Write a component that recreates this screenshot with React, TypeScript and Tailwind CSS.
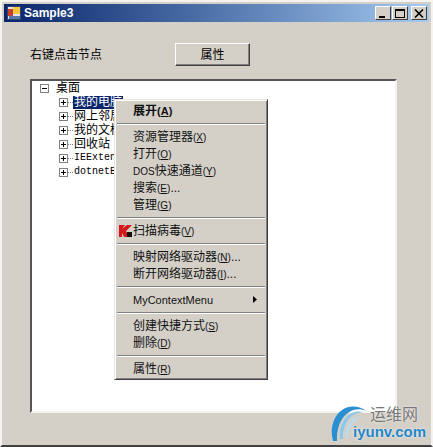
import type { ReactNode } from "react";

const CJK = "font-['Liberation_Sans','Noto_Sans_CJK_SC',sans-serif]";

function Expander({ open = false }: { open?: boolean }) {
  return (
    <svg width="9" height="9" viewBox="0 0 9 9" className="shrink-0">
      <rect x="0.5" y="0.5" width="8" height="8" fill="#fff" stroke="#808080" />
      <path d={open ? "M2 4.5H7" : "M2 4.5H7M4.5 2V7"} stroke="#000" />
    </svg>
  );
}

function TreeRow({ label, mono = false, selected = false }: { label: string; mono?: boolean; selected?: boolean }) {
  return (
    <div className="flex h-[14px] items-center pl-[27px]">
      <Expander />
      <div className="h-0 w-[5px] border-t border-dotted border-[#808080]" />
      <span
        className={`flex h-[13px] items-center whitespace-nowrap px-px leading-none ${
          mono ? "font-['Liberation_Mono',monospace] text-[10px]" : "text-[12px]"
        } ${selected ? "bg-[#0a246a] text-white" : "text-black"}`}
      >
        {label}
      </span>
    </div>
  );
}

function Sep() {
  return (
    <div className="flex h-[9px] items-center">
      <div className="h-[2px] w-full border-t border-b border-t-[#808080] border-b-white" />
    </div>
  );
}

function Item({ text, hot, tail = "", bold = false, icon = false, arrow = false }: { text: ReactNode; hot?: string; tail?: string; bold?: boolean; icon?: boolean; arrow?: boolean }) {
  return (
    <div className={`relative flex h-[17px] items-center whitespace-nowrap pl-[16px] text-[12px] leading-none text-[#111] ${bold ? "font-bold" : ""}`}>
      {icon && (
        <svg width="14" height="14" viewBox="0 0 14 14" className="absolute left-[2px] top-[2px]">
          <path d="M0 1H6L3 5L8 1H13L7 7L10 13H5L3 9V13H0Z" fill="#d8141c" />
          <path d="M8 8H13V13H8Z" fill="#111" />
        </svg>
      )}
      <span>
        {text}
        {hot && (
          <span className={bold ? "text-[11px]" : "text-[10px]"}>
            (<span className="underline">{hot}</span>)
          </span>
        )}
        {tail}
      </span>
      {arrow && (
        <svg width="4" height="7" viewBox="0 0 4 7" className="absolute right-[8px] top-[5px]">
          <path d="M0 0L4 3.5L0 7Z" fill="#000" />
        </svg>
      )}
    </div>
  );
}

function Caption({ children }: { children: ReactNode }) {
  return (
    <div className="flex h-[14px] w-[16px] items-center justify-center border border-t-white border-l-white border-r-[#404040] border-b-[#404040] bg-[#d4d0c8]">
      {children}
    </div>
  );
}

export default function App() {
  return (
    <div className={`relative h-[447px] w-[433px] overflow-hidden border-x-2 border-t-2 border-b-2 border-x-[#f4f3ef] border-t-[#f4f3ef] border-b-[#404040] bg-[#d4d0c8] ${CJK}`}>
      <div className="mx-[2px] mt-[2px] flex h-[18px] items-center bg-gradient-to-r from-[#0a246a] to-[#a6caf0] pl-[3px] pr-[2px]">
        <svg width="14" height="14" viewBox="0 0 14 14" className="shrink-0">
          <rect x="0.5" y="0.5" width="13" height="13" fill="#dfe6f0" stroke="#31456f" />
          <rect x="1" y="3" width="5" height="7" fill="#c8402c" />
          <rect x="6" y="1" width="7" height="7" fill="#f4c73c" />
          <rect x="2" y="10" width="11" height="3" fill="#5878b0" />
        </svg>
        <span className="ml-[3px] text-[12px] font-bold text-white">Sample3</span>
        <div className="ml-auto flex gap-px">
          <Caption>
            <div className="mt-[7px] mr-[2px] h-[2px] w-[6px] bg-black" />
          </Caption>
          <div className="mr-[2px]">
            <Caption>
              <div className="h-[9px] w-[10px] border border-t-2 border-black" />
            </Caption>
          </div>
          <Caption>
            <svg width="10" height="9" viewBox="0 0 10 9">
              <path d="M1 0.5L9 8.5M9 0.5L1 8.5" stroke="#000" strokeWidth="1.6" />
            </svg>
          </Caption>
        </div>
      </div>

      <div className="mt-[21px] flex h-[23px] items-center pl-[28px]">
        <span className="w-[145px] text-[12px] text-black">右键点击节点</span>
        <button className="flex h-[23px] w-[75px] items-center justify-center border border-t-white border-l-white border-r-[#404040] border-b-[#404040] bg-[#d4d0c8] text-[12px] text-black shadow-[inset_-1px_-1px_0_#808080]">
          属性
        </button>
      </div>

      <div className="ml-[28px] mt-[13px] h-[334px] w-[367px] border-2 border-t-[#555] border-l-[#555] border-b-[#f4f3ef] border-r-[#f4f3ef] bg-white">
        <div className="flex h-[14px] items-center pl-[8px]">
          <Expander open />
          <span className="ml-[7px] text-[12px] leading-none text-black">桌面</span>
        </div>
        <TreeRow label="我的电脑" selected />
        <TreeRow label="网上邻居" />
        <TreeRow label="我的文档" />
        <TreeRow label="回收站" />
        <TreeRow label="IEExtension" mono />
        <TreeRow label="dotnetBar" mono />
      </div>

      <div className="absolute left-[112px] top-[97px] w-[154px] border border-t-[#e8e6e0] border-l-[#e8e6e0] border-r-[#404040] border-b-[#404040] bg-[#d4d0c8] p-[2px] shadow-[inset_1px_1px_0_#fff,inset_-1px_-1px_0_#808080]">
        <Item text="展开" hot="A" bold />
        <Sep />
        <Item text="资源管理器" hot="X" />
        <Item text="打开" hot="O" />
        <Item text={<><span className="text-[10px]">DOS</span>快速通道</>} hot="Y" />
        <Item text="搜索" hot="E" tail="..." />
        <Item text="管理" hot="G" />
        <Sep />
        <Item text="扫描病毒" hot="V" icon />
        <Sep />
        <Item text="映射网络驱动器" hot="N" tail="..." />
        <Item text="断开网络驱动器" hot="I" tail="..." />
        <Sep />
        <Item text={<span className="text-[11px]">MyContextMenu</span>} arrow />
        <Sep />
        <Item text="创建快捷方式" hot="S" />
        <Item text="删除" hot="D" />
        <Sep />
        <Item text="属性" hot="R" />
      </div>

      <div className="absolute left-[328px] top-[397px] h-[46px] w-[101px]">
        <svg width="44" height="46" viewBox="0 0 44 46" className="absolute left-0 top-0">
          <path d="M3 42C-3 20 14 -2 37 12C20 5 6 20 7 42Z" fill="#2a8fd0" />
          <path d="M10 40C8 24 20 7 35 14C22 11 12 25 13 40Z" fill="#8cc8ec" />
          <path d="M16 38C15 28 22 16 32 18C24 19 18 29 18 38Z" fill="#b8dcf2" />
        </svg>
        <span className="absolute left-[40px] top-[8px] text-[16px] leading-none text-[#777] [text-shadow:0_0_2px_#fff]">运维网</span>
        <span className="absolute left-[23px] top-[25px] font-['Liberation_Sans',sans-serif] text-[15px] font-bold leading-none text-[#1f86c8] [text-shadow:0_0_2px_#fff]">iyunv.com</span>
      </div>
    </div>
  );
}
